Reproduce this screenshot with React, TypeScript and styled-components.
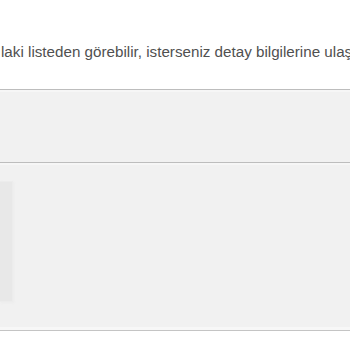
import React from "react";
import styled, { createGlobalStyle } from "styled-components";

const Global = createGlobalStyle`
  html, body { margin: 0; padding: 0; background: #ffffff; }
  body { width: 350px; height: 350px; overflow: hidden; font-family: "Liberation Sans", Arial, sans-serif; }
`;

const Page = styled.div`
  width: 350px;
  height: 350px;
  display: flex;
  flex-direction: column;
  background: #fff;
  overflow: hidden;
`;

const Intro = styled.div`
  height: 89px;
  display: flex;
  align-items: flex-start;
  padding-top: 42px;
  box-sizing: border-box;
  overflow: hidden;
`;

const IntroText = styled.p`
  margin: 0 0 0 1px;
  white-space: nowrap;
  font-size: 15.2px;
  line-height: 19px;
  color: #505050;
`;

const Band = styled.div<{ $h: number }>`
  height: ${(p) => p.$h}px;
  box-sizing: border-box;
  border-top: 1px solid #bdbdbd;
  background: #f1f1f1;
  box-shadow: inset 0 2px 0 #f6f6f6;
  display: flex;
  align-items: flex-start;
`;

const Body = styled(Band)`
  padding-top: 18px;
  border-bottom: 1px solid #c4c4c4;
  box-shadow: inset 0 2px 0 #f6f6f6, inset 0 -3px 0 #f7f7f7;
`;

const SideCard = styled.div`
  width: 12px;
  height: 119px;
  background: #e8e8e8;
  border: 1px solid #ececec;
  border-left: none;
  box-shadow: 1px 1px 2px #ececec;
`;

export default function App() {
  return (
    <Page>
      <Global />
      <Intro>
        <IntroText>laki listeden görebilir, isterseniz detay bilgilerine ulaşabilirsiniz.</IntroText>
      </Intro>
      <Band $h={73} />
      <Body $h={169}>
        <SideCard />
      </Body>
    </Page>
  );
}
